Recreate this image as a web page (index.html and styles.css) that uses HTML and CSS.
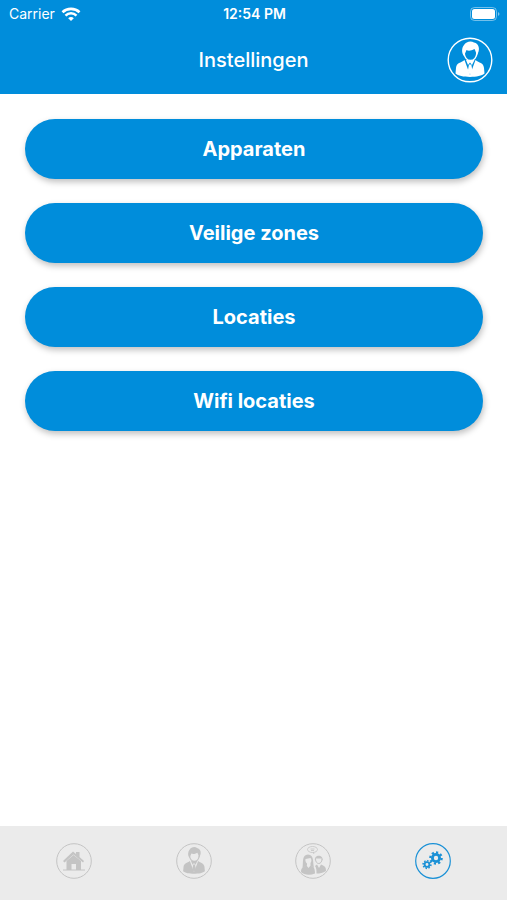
FILE: index.html
```
<!DOCTYPE html>
<html lang="nl">
<head>
    <meta charset="UTF-8">
    <meta name="viewport" content="width=device-width, initial-scale=1.0">
    <title>Instellingen</title>
    <link rel="stylesheet" href="styles.css">
</head>
<body>
    <!-- shared person icon -->
    <svg class="sprite" aria-hidden="true">
        <symbol id="person" viewBox="0 0 48 48">
            <path d="M18 20 C15.500 17 15.500 12 18 9 C20 5.500 25 4.500 28 6.500 C33 7.500 34 13 32 17 L30.500 20 C30.500 17 29.500 15 28.500 13 C25 15 22 15 20.500 14 C19.500 16 19 18 18 20 Z" fill="currentColor"/>
            <path d="M18 17 C18.500 21 21 24.500 24.500 24.500 C28 24.500 30.500 21 31 17" fill="none" stroke="currentColor" stroke-width="1.600"/>
            <path d="M18.500 24 L24 39 L29.500 24 C33 27 37.500 26.500 38 32 L38.500 37.500 C34 42 14 42 9.500 37.500 L10 32 C10.500 26.500 15 27 18.500 24 Z" fill="currentColor"/>
            <path d="M20 24 L22 29 L24 26.500 L26 29 L28.500 24 M23 28.500 L25.300 28.500 L26.500 35 L24 39 L21.800 35 Z" fill="currentColor"/>
        </symbol>
    </svg>

    <header class="header">
        <div class="status-bar">
            <div class="carrier">
                <span>Carrier</span>
                <svg class="wifi" viewBox="0 0 20 14" aria-hidden="true">
                    <path d="M1.500 5.200 C6 0.800 14 0.800 18.500 5.200" fill="none" stroke="currentColor" stroke-width="2.600"/>
                    <path d="M4.500 8.600 C7.500 5.500 12.500 5.500 15.500 8.600" fill="none" stroke="currentColor" stroke-width="2.400"/>
                    <path d="M10 14 L7.200 11.200 C8.700 9.600 11.300 9.600 12.800 11.200 Z" fill="currentColor"/>
                </svg>
            </div>
            <span class="time">12:54 PM</span>
            <svg class="battery" viewBox="0 0 30 14" aria-hidden="true">
                <rect x="0.500" y="0.500" width="26" height="13" rx="4" fill="none" stroke="currentColor" opacity="0.450"/>
                <rect x="2" y="2" width="23" height="10" rx="2.500" fill="currentColor"/>
                <path d="M28 5 C30 6 30 8 28 9 Z" fill="currentColor" opacity="0.500"/>
            </svg>
        </div>
        <div class="title-bar">
            <h1>Instellingen</h1>
            <button type="button" class="profile" aria-label="Profiel">
                <svg viewBox="0 0 48 48" aria-hidden="true">
                    <circle cx="24" cy="24" r="21.800" fill="none" stroke="currentColor" stroke-width="1.400"/>
                    <use href="#person"/>
                </svg>
            </button>
        </div>
    </header>

    <main class="menu">
        <button type="button" class="btn">Apparaten</button>
        <button type="button" class="btn">Veilige zones</button>
        <button type="button" class="btn">Locaties</button>
        <button type="button" class="btn">Wifi locaties</button>
    </main>

    <nav class="tabs">
        <a href="#home" aria-label="Home">
            <svg viewBox="0 0 36 36" aria-hidden="true">
                <circle cx="18" cy="18" r="17.300" fill="none" stroke="currentColor"/>
                <path d="M7 18 L17 8.500 L20 11 V9 H23.500 V14 L28 18 L27 19.500 L17.500 11.500 L8.500 19.500 Z" fill="currentColor"/>
                <path d="M10.500 18 L17.500 12 L25 18 V27 H20 V21 H15.500 V27 H10.500 Z" fill="currentColor"/>
                <path d="M7 27 H29" stroke="currentColor"/>
            </svg>
        </a>
        <a href="#persoon" aria-label="Persoon">
            <svg viewBox="0 0 36 36" aria-hidden="true">
                <circle cx="18" cy="18" r="17.300" fill="none" stroke="currentColor"/>
                <use href="#person" width="36" height="36"/>
            </svg>
        </a>
        <a href="#contacten" aria-label="Contacten">
            <svg viewBox="0 0 36 36" aria-hidden="true">
                <circle cx="18" cy="18" r="17.300" fill="none" stroke="currentColor"/>
                <ellipse cx="17.500" cy="6.500" rx="5" ry="3" fill="none" stroke="currentColor" stroke-width="0.800"/>
                <path d="M15.500 6 H19.500 M16 7.500 H19 M18 9 L19 11" stroke="currentColor" stroke-width="0.800"/>
                <path d="M7.500 25 C8.500 19 6.500 12 13 11.500 C19.500 12 17.500 19 19 25 L15.500 22.500 V20 C17 18 16.500 16 15.500 15 L10.500 16 C10 18 11 20 12 20.500 V22.500 Z" fill="currentColor"/>
                <path d="M6 29 C6 24 9 24 11.500 22.500 L13.500 25 L15.500 22.500 C18 24 20 24 20 30.500 C15 32.500 9 32 6 29 Z" fill="currentColor"/>
                <path d="M20 17.500 C18.500 11 29 11 27.500 17.500 L26.500 15.500 H21 Z" fill="currentColor"/>
                <path d="M20.500 16 C20.500 22 27 22 27 16" fill="none" stroke="currentColor"/>
                <path d="M20 23 L22 21.500 L24 25 L26 21.500 C29 23 31 23 31 28 C28 30 25 30.500 21.500 30.500 C21.500 27 21.500 25 20 23 Z" fill="currentColor"/>
            </svg>
        </a>
        <a href="#instellingen" class="active" aria-label="Instellingen" aria-current="page">
            <svg viewBox="0 0 36 36" aria-hidden="true">
                <circle cx="18" cy="18" r="17.300" fill="none" stroke="currentColor" stroke-width="1.200"/>
                <!-- gears: solid ring plus dashed teeth -->
                <g fill="none" stroke="currentColor">
                    <circle cx="21" cy="15" r="3.600" stroke-width="2.800"/>
                    <circle cx="21" cy="15" r="5.700" stroke-width="2.200" pathLength="16" stroke-dasharray="1 1"/>
                    <circle cx="12" cy="21.500" r="2.400" stroke-width="1.900"/>
                    <circle cx="12" cy="21.500" r="3.900" stroke-width="1.600" pathLength="16" stroke-dasharray="1 1"/>
                </g>
            </svg>
        </a>
    </nav>
</body>
</html>
```
FILE: styles.css
```
* {
    margin: 0;
    padding: 0;
    box-sizing: border-box;
    font-family: 'Inter', sans-serif;
}
body {
    min-height: 100vh;
    display: flex;
    flex-direction: column;
    background: #fff;
}
.sprite {
    display: none;
}
.header {
    background: #008ddb;
    color: white;
}
.status-bar {
    display: grid;
    grid-template-columns: 1fr auto 1fr;
    align-items: center;
    height: 27px;
    padding: 0 7px 0 9px;
    font-size: 14px;
}
.carrier {
    display: flex;
    align-items: center;
    gap: 6px;
}
.wifi {
    width: 20px;
    height: 14px;
}
.time {
    font-size: 14px;
    font-weight: 600;
}
.battery {
    width: 30px;
    height: 14px;
    justify-self: end;
}
.title-bar {
    display: grid;
    grid-template-columns: 1fr auto 1fr;
    align-items: center;
    height: 67px;
    padding: 0 13px 2px;
}
h1 {
    grid-column: 2;
    font-size: 20px;
    font-weight: 500;
}
.profile {
    justify-self: end;
    width: 48px;
    height: 48px;
    border: none;
    background: none;
    color: white;
    cursor: pointer;
}
.profile svg {
    display: block;
}
.menu {
    flex: 1;
    display: flex;
    flex-direction: column;
    gap: 24px;
    padding: 25px 24px 25px 25px;
}
.btn {
    height: 60px;
    border: none;
    border-radius: 30px;
    background: #008ddb;
    color: white;
    font-size: 20px;
    font-weight: 700;
    box-shadow: 1px 3px 6px rgba(0, 0, 0, 0.25);
    cursor: pointer;
}
.tabs {
    display: flex;
    height: 74px;
    padding: 17px 14px;
    background: #ebebeb;
}
.tabs a {
    flex: 1;
    display: flex;
    justify-content: center;
    color: #c4c4c4;
}
.tabs a.active {
    color: #1b91d6;
}
.tabs svg {
    width: 36px;
    height: 36px;
}
```
